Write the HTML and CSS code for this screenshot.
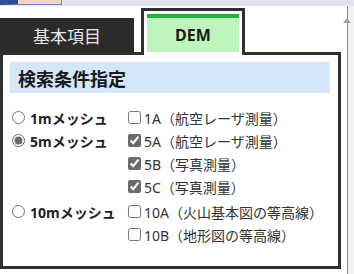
FILE: index.html
```html
<!DOCTYPE html>
<html lang="ja">
<head>
    <meta charset="UTF-8">
    <meta name="viewport" content="width=device-width, initial-scale=1.0">
    <title>DEM検索条件</title>
    <link rel="stylesheet" href="styles.css">
</head>
<body>
    <div class="window">
        <div class="topbar"><span class="topbar-sel"></span></div>

        <div class="main">
            <div class="page">
                <div class="tabs">
                    <div class="tab tab-dark">基本項目</div>
                    <div class="tab tab-active"><div class="tab-inner">DEM</div></div>
                </div>

                <div class="panel">
                    <h2 class="panel-title">検索条件指定</h2>

                    <div class="options">
                        <div class="group">
                            <label class="mesh"><input type="radio" name="mesh" value="1m">1mメッシュ</label>
                            <div class="types">
                                <label class="type"><input type="checkbox" value="1A">1A（航空レーザ測量）</label>
                            </div>
                        </div>

                        <div class="group">
                            <label class="mesh"><input type="radio" name="mesh" value="5m" checked>5mメッシュ</label>
                            <div class="types">
                                <label class="type"><input type="checkbox" value="5A" checked>5A（航空レーザ測量）</label>
                                <label class="type"><input type="checkbox" value="5B" checked>5B（写真測量）</label>
                                <label class="type"><input type="checkbox" value="5C" checked>5C（写真測量）</label>
                            </div>
                        </div>

                        <div class="group group-last">
                            <label class="mesh"><input type="radio" name="mesh" value="10m">10mメッシュ</label>
                            <div class="types">
                                <label class="type"><input type="checkbox" value="10A">10A（火山基本図の等高線）</label>
                                <label class="type"><input type="checkbox" value="10B">10B（地形図の等高線）</label>
                            </div>
                        </div>
                    </div>
                </div>
            </div>

            <div class="scrollbar"></div>
        </div>
    </div>
</body>
</html>
```

FILE: styles.css
```css
body {
    margin: 0;
    padding: 0;
    font-family: "Noto Sans", "Noto Sans CJK JP", sans-serif;
    color: #333;
    background-color: #fff;
}

.window {
    width: 354px;
    height: 274px;
    overflow: hidden;
    background: #fff;
}

.topbar {
    height: 6px;
    background-color: #dfe3ea;
    display: flex;
}

.topbar-sel {
    width: 62px;
    height: 5px;
    box-sizing: border-box;
    background: #f2d3c4;
    border-left: 18px solid #2b4d9c;
    border-right: 1px solid #6f86c0;
    border-bottom: 1px solid #6f86c0;
}

.main {
    display: flex;
    height: 268px;
}

.page {
    width: 347px;
}

.scrollbar {
    position: relative;
    width: 6px;
    border-left: 1px solid #8a8a8a;
    background: #f3f3f3;
}

.scrollbar::before {
    content: "";
    position: absolute;
    top: 12px;
    left: -5px;
    border-left: 4px solid transparent;
    border-right: 4px solid transparent;
    border-bottom: 5px solid #a0a0a0;
}

/* tabs */
.tabs {
    display: flex;
    align-items: flex-end;
    gap: 7px;
    height: 44px;
    padding-top: 2px;
}

.tab-dark {
    width: 134px;
    height: 34px;
    background-color: #2b2b2b;
    color: #e8e8e8;
    font-size: 17px;
    display: flex;
    justify-content: center;
    align-items: center;
}

.tab-active {
    position: relative;
    z-index: 1;
    width: 104px;
    box-sizing: border-box;
    border: 3px solid #2f2f2f;
    border-bottom: none;
    padding: 3px 3px 3px;
    margin-bottom: -3px;
    background: #fff;
}

.tab-inner {
    height: 38px;
    box-sizing: border-box;
    border-top: 4px solid #22b43a;
    background-color: #bdf5bd;
    color: #1a1a1a;
    font-size: 16px;
    font-weight: bold;
    display: flex;
    justify-content: center;
    align-items: center;
}

/* panel */
.panel {
    width: 341px;
    height: 217px;
    box-sizing: border-box;
    border: 3px solid #2f2f2f;
    padding: 7px 8px 0 7px;
}

.panel-title {
    margin: 0;
    height: 31px;
    padding-left: 8px;
    background-color: #d5e7fb;
    color: #1a1a1a;
    font-size: 18px;
    font-weight: bold;
    display: flex;
    align-items: center;
}

.options {
    margin-top: 13px;
    padding-left: 2px;
}

.group {
    display: flex;
    align-items: flex-start;
}

.group-last {
    margin-top: 2px;
}

.mesh {
    width: 116px;
    height: 23px;
    display: flex;
    align-items: center;
    gap: 5px;
    font-size: 14px;
    font-weight: bold;
    color: #222;
}

.types {
    display: flex;
    flex-direction: column;
}

.type {
    height: 23px;
    display: flex;
    align-items: center;
    gap: 3px;
    font-size: 14px;
    color: #333;
}

.mesh input, .type input {
    width: 13px;
    height: 13px;
    margin: 0;
    accent-color: #6a6a6a;
}
```
